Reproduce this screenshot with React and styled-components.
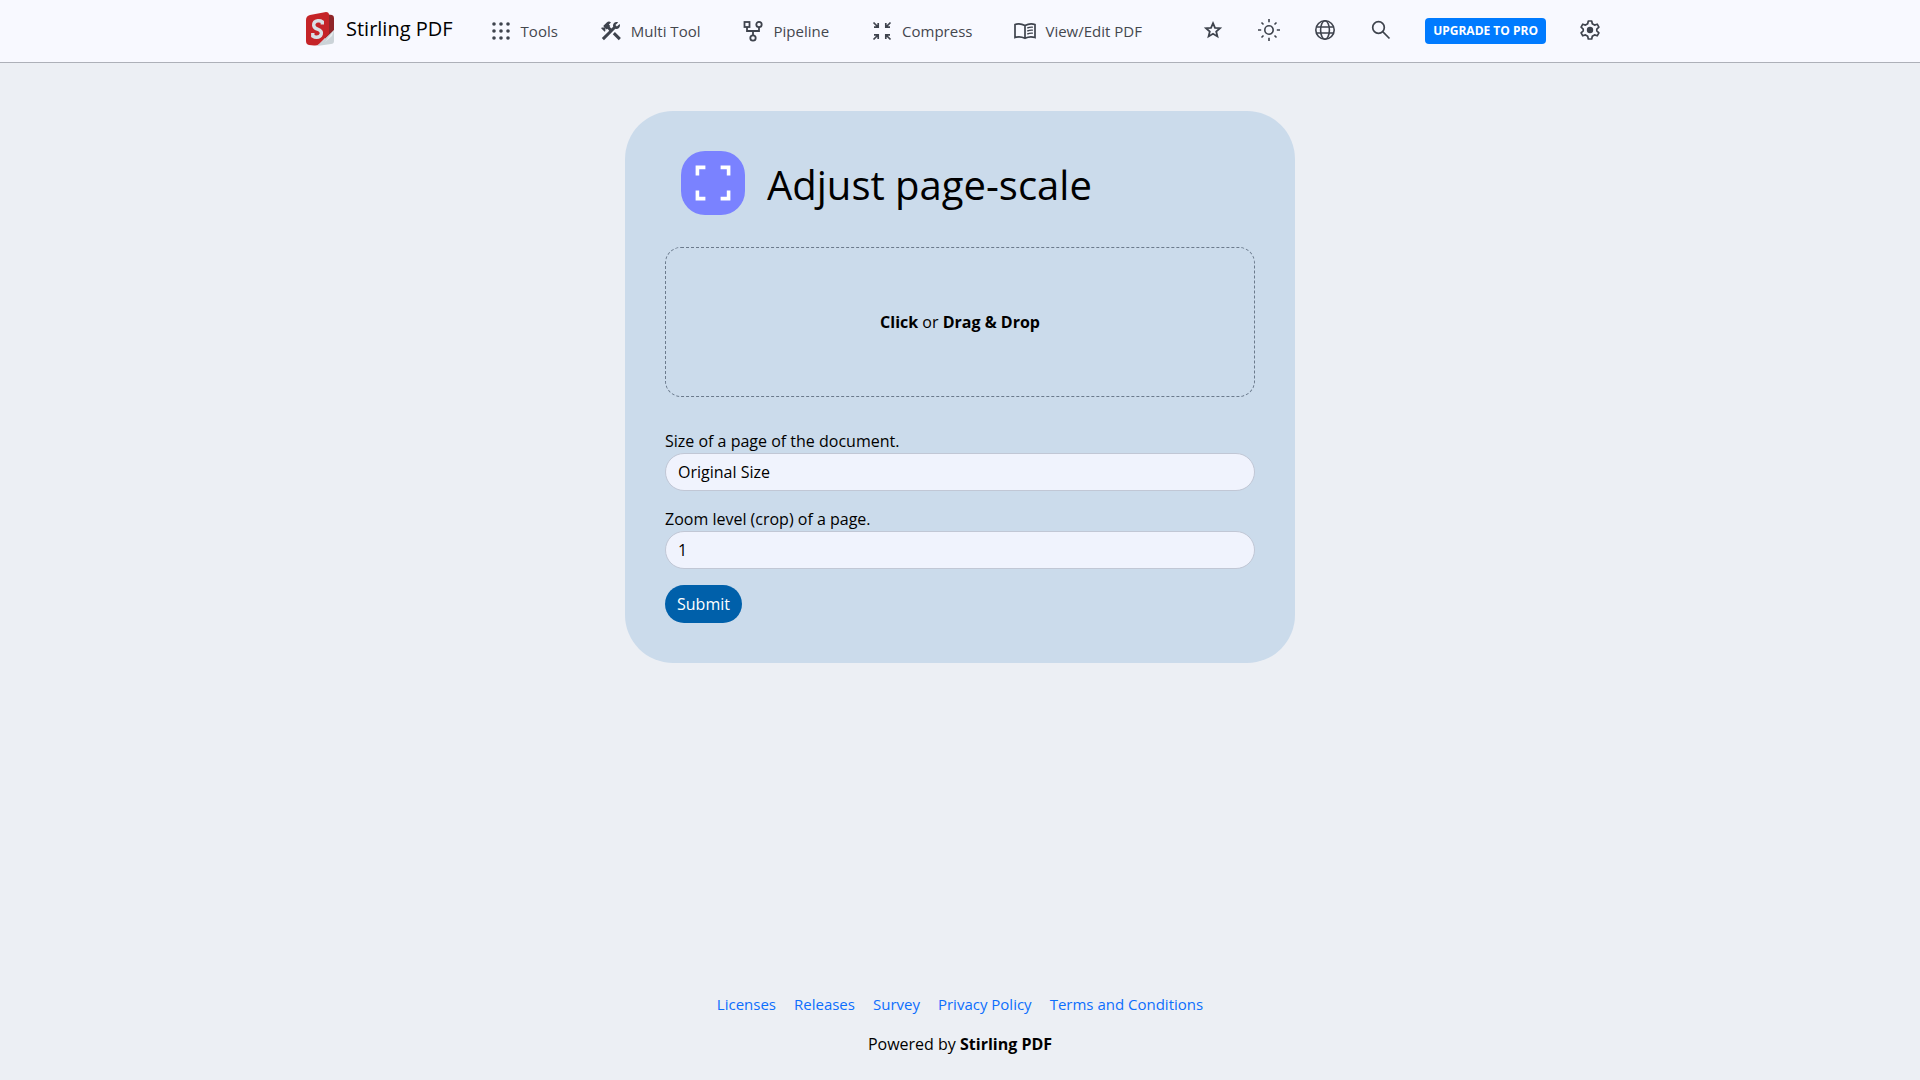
import React from "react";
import styled, { createGlobalStyle } from "styled-components";
import { MdConstruction } from "react-icons/md";

const GlobalStyle = createGlobalStyle`
  *, *::before, *::after { box-sizing: border-box; }
  body {
    margin: 0;
    background: #eceff4;
    color: #000;
    font-family: "Open Sans", "Noto Sans CJK KR", sans-serif;
    font-size: 16px;
    line-height: 24px;
  }
  button, input, select { font: inherit; }
  a { text-decoration: none; }
`;

const Page = styled.div`
  min-height: 100vh;
  display: flex;
  flex-direction: column;
`;

const Header = styled.header`
  background: #f8f9ff;
  border-bottom: 1px solid #adb0b8;
`;

const Nav = styled.nav`
  width: 100%;
  max-width: 1320px;
  height: 62px;
  margin: 0 auto;
  padding: 0 18px 2px 5px;
  display: flex;
  align-items: center;
  justify-content: space-between;
`;

const NavGroup = styled.div`
  display: flex;
  align-items: center;
  gap: ${(p) => p.$gap};
`;

const Brand = styled.a`
  display: flex;
  align-items: center;
  gap: 9px;
  color: #000;
  font-size: 20px;
  line-height: 30px;
  white-space: nowrap;
  margin-bottom: 2px;
`;

const NavLink = styled.a`
  display: flex;
  align-items: center;
  gap: 8px;
  padding-top: 2px;
  color: #44474e;
  font-size: 15px;
  white-space: nowrap;
  svg { color: #3e434d; }
`;

const IconButton = styled.button`
  display: flex;
  padding: 0;
  border: 0;
  background: none;
  color: #3e434d;
  cursor: pointer;
`;

const ProLink = styled.a`
  margin-top: 2px;
  padding: 4px 8px;
  border-radius: 4px;
  background: #007bff;
  color: #fff;
  font-size: 12px;
  line-height: 18px;
  font-weight: 700;
  white-space: nowrap;
`;

const Main = styled.main`
  flex: 1;
  padding: 48px 12px;
`;

const Card = styled.section`
  width: 100%;
  max-width: 670px;
  margin: 0 auto;
  padding: 40px;
  border-radius: 48px;
  background: #cbdbeb;
`;

const TitleRow = styled.div`
  display: flex;
  align-items: center;
  gap: 22px;
  padding: 0 16px;
  margin-bottom: 32px;
`;

const Tile = styled.span`
  display: flex;
  align-items: center;
  justify-content: center;
  width: 64px;
  height: 64px;
  border-radius: 24px;
  background: #7a82ff;
  color: #fff;
`;

const Title = styled.h1`
  margin: 0;
  padding-top: 4px;
  font-size: 40px;
  line-height: 60px;
  font-weight: 400;
`;

const DropZone = styled.button`
  width: 100%;
  height: 150px;
  margin-bottom: 32px;
  border: 1px dashed #6b7a8c;
  border-radius: 16px;
  background: none;
  color: #000;
  cursor: pointer;
`;

const Field = styled.div`
  margin-bottom: 16px;
`;

const Label = styled.label`
  display: block;
`;

const Control = styled.input`
  display: block;
  appearance: none;
  width: 100%;
  height: 38px;
  padding: 6px 12px;
  border: 1px solid #c1c7d5;
  border-radius: 19px;
  background: #f0f3fd;
  color: #000;
  outline: none;
`;

const Submit = styled.button`
  display: block;
  height: 38px;
  padding: 6px 12px;
  border: 0;
  border-radius: 19px;
  background: #0060aa;
  color: #fff;
  cursor: pointer;
`;

const Footer = styled.footer`
  display: flex;
  flex-direction: column;
  align-items: center;
  gap: 16px;
  padding-bottom: 24px;
`;

const FooterLinks = styled.div`
  display: flex;
  flex-wrap: wrap;
  justify-content: center;
  gap: 18px;
`;

const FooterLink = styled.a`
  color: #0d6efd;
  font-size: 15px;
`;

function Icon({ size = 24, children, stroke = 2 }) {
  return (
    <svg width={size} height={size} viewBox="0 0 24 24" fill="none" stroke="currentColor" strokeWidth={stroke} aria-hidden="true">
      {children}
    </svg>
  );
}

function Logo() {
  return (
    <svg width="32" height="36" viewBox="0 0 32 36" aria-hidden="true">
      <path d="M20 3 27 4Q29 4.500 29 7V20L20 30Z" fill="#8f2529" />
      <path d="M29 19V30Q29 33 26 33L12 35Z" fill="#cbd3d8" />
      <path d="M29 19 20 31 27 25Z" fill="#e5eaec" />
      <path d="M1 9Q1 5 5 4L21 1Q24 1 24 4V23L14 33Q12 35 9 34.500L4 34Q1 33.500 1 30Z" fill="#c52428" />
      <path d="M17.300 13.500V10.800Q15.500 9.500 12.800 9.800Q8.500 10.500 8.700 14.300Q9 17 12.500 18.200Q17 19.800 16.300 23Q15.300 26.300 11.500 26.200Q9.500 26.200 7.800 25V22" fill="none" stroke="#d8e0e5" strokeWidth="3.400" />
    </svg>
  );
}

function AppsIcon() {
  return (
    <svg width="24" height="24" viewBox="0 0 24 24" fill="currentColor" aria-hidden="true">
      {[5, 12, 19].map((y) => [5, 12, 19].map((x) => <circle key={`${x}-${y}`} cx={x} cy={y} r="1.800" />))}
    </svg>
  );
}

function PipelineIcon() {
  return (
    <Icon stroke={1.8}>
      <rect x="3.500" y="3" width="5" height="5" />
      <circle cx="18" cy="5.500" r="2.700" />
      <circle cx="12" cy="19" r="2.700" />
      <path d="M6 8V12H18V8M12 12V16" />
    </Icon>
  );
}

function CompressIcon() {
  return (
    <Icon stroke={1.7}>
      <path d="M3.500 3.500 8 8M4 8.200H8.200V4M20.500 3.500 16 8M20 8.200H15.800V4M3.500 20.500 8 16M4 15.800H8.200V20M20.500 20.500 16 16M20 15.800H15.800V20" />
    </Icon>
  );
}

function BookIcon() {
  return (
    <Icon stroke={1.7}>
      <path d="M12 6.500Q7 3.800 2 5.500V18.500Q7 16.800 12 19.300Q17 16.800 22 18.500V5.500Q17 3.800 12 6.500V19" />
      <path d="M14.300 9Q17 7.900 19.800 8.200M14.300 12Q17 10.900 19.800 11.200M14.300 15Q17 13.900 19.800 14.200" strokeWidth="1.400" />
    </Icon>
  );
}

function SunIcon() {
  return (
    <Icon stroke={1.6}>
      <circle cx="12" cy="12" r="4.200" />
      <path d="M12 1V4.200M12 19.800V23M1 12H4.200M19.800 12H23M4.500 4.500 6.500 6.500M17.500 17.500 19.500 19.500M4.500 19.500 6.500 17.500M17.500 6.500 19.500 4.500" />
    </Icon>
  );
}

function GlobeIcon() {
  return (
    <Icon stroke={1.6}>
      <circle cx="12" cy="12" r="9.200" />
      <ellipse cx="12" cy="12" rx="4.400" ry="9.200" />
      <path d="M3.500 9H20.500M3.500 15H20.500" />
    </Icon>
  );
}

function GearIcon() {
  return (
    <Icon stroke={1.7}>
      <path d="M10.300 3H13.700L14.300 5.800 16.500 7.100 19.200 6.200 20.900 9.200 18.800 11.100V12.900L20.900 14.800 19.200 17.800 16.500 16.900 14.300 18.200 13.700 21H10.300L9.700 18.200 7.500 16.900 4.800 17.800 3.100 14.800 5.200 12.900V11.100L3.100 9.200 4.800 6.200 7.500 7.100 9.700 5.800Z" strokeLinejoin="round" />
      <circle cx="12" cy="12" r="3.200" fill="currentColor" stroke="none" />
    </Icon>
  );
}

const tools = [
  ["Tools", <AppsIcon />],
  ["Multi Tool", <MdConstruction size={24} />],
  ["Pipeline", <PipelineIcon />],
  ["Compress", <CompressIcon />],
  ["View/Edit PDF", <BookIcon />],
];

const footerLinks = ["Licenses", "Releases", "Survey", "Privacy Policy", "Terms and Conditions"];

export default function App() {
  return (
    <Page>
      <GlobalStyle />
      <Header>
        <Nav>
          <NavGroup $gap="36px">
            <Brand href="#home">
              <Logo />
              Stirling PDF
            </Brand>
            <NavGroup $gap="41px">
              {tools.map(([name, icon]) => (
                <NavLink key={name} href="#tool">
                  {icon}
                  {name}
                </NavLink>
              ))}
            </NavGroup>
          </NavGroup>
          <NavGroup $gap="32px">
            <IconButton aria-label="Favorites">
              <Icon stroke={1.8}>
                <path d="m12 5.200 2 4.600 5 .4-3.800 3.300 1.200 4.900L12 15.800l-4.400 2.600 1.200-4.900L5 10.200l5-.4Z" />
              </Icon>
            </IconButton>
            <IconButton aria-label="Theme"><SunIcon /></IconButton>
            <IconButton aria-label="Language"><GlobeIcon /></IconButton>
            <IconButton aria-label="Search">
              <Icon stroke={1.7}>
                <circle cx="9.500" cy="9.500" r="5.800" />
                <path d="m13.700 13.700 6.800 6.800" />
              </Icon>
            </IconButton>
            <ProLink href="#pro">UPGRADE TO PRO</ProLink>
            <IconButton aria-label="Settings"><GearIcon /></IconButton>
          </NavGroup>
        </Nav>
      </Header>
      <Main>
        <Card>
          <TitleRow>
            <Tile>
              <Icon size={48} stroke={1.8}>
                <path d="M4.200 8.200V4.200H8.200M15.800 4.200H19.800V8.200M19.800 15.800V19.800H15.800M8.200 19.800H4.200V15.800" />
              </Icon>
            </Tile>
            <Title>Adjust page-scale</Title>
          </TitleRow>
          <form onSubmit={(e) => e.preventDefault()}>
            <DropZone type="button">
              <b>Click</b> or <b>Drag &amp; Drop</b>
            </DropZone>
            <Field>
              <Label htmlFor="pageSize">Size of a page of the document.</Label>
              <Control as="select" id="pageSize">
                <option>Original Size</option>
              </Control>
            </Field>
            <Field>
              <Label htmlFor="scaleFactor">Zoom level (crop) of a page.</Label>
              <Control type="number" id="scaleFactor" defaultValue="1" />
            </Field>
            <Submit type="submit">Submit</Submit>
          </form>
        </Card>
      </Main>
      <Footer>
        <FooterLinks>
          {footerLinks.map((name) => (
            <FooterLink key={name} href="#info">{name}</FooterLink>
          ))}
        </FooterLinks>
        <div>Powered by <b>Stirling PDF</b></div>
      </Footer>
    </Page>
  );
}
